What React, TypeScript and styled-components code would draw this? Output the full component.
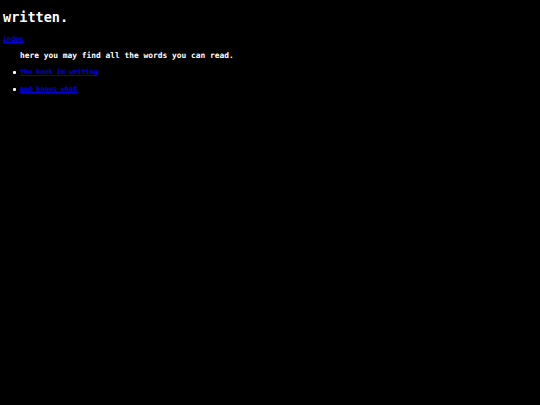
import React from 'react';
import styled, { createGlobalStyle } from 'styled-components';

const GlobalStyle = createGlobalStyle`
  html, body {
    margin: 0;
    background: #000;
  }
  body {
    padding: 4px 3px;
    font-family: "DejaVu Sans Mono", "Liberation Mono", monospace;
    font-weight: bold;
    color: #fff;
  }
`;

const Title = styled.h1`
  font-size: 13.5px;
  line-height: 17px;
  margin: 5px 0 0;
`;

const Link = styled.a`
  color: #0000e0;
  font-size: 6.8px;
  text-decoration: underline;
`;

const Intro = styled.p`
  font-size: 7.9px;
  line-height: 10px;
  margin: 6px 0 0 17px;
`;

const List = styled.ul`
  margin: 7px 0 0;
  padding-left: 17px;
  list-style: none;
`;

const Item = styled.li`
  position: relative;
  font-size: 6.8px;
  line-height: 9px;
  margin-bottom: 8px;

  &::before {
    content: '';
    position: absolute;
    left: -7px;
    top: 3px;
    width: 3px;
    height: 3px;
    border-radius: 1px;
    background: #fff;
  }
`;

const pages = [
  { name: 'the book im writing', url: '#book' },
  { name: 'god knows what', url: '#misc' },
];

const App = () => (
  <>
    <GlobalStyle />
    <Title>written.</Title>
    <Link href="#index">index</Link>
    <Intro>here you may find all the words you can read.</Intro>
    <List>
      {pages.map((page) => (
        <Item key={page.url}>
          <Link href={page.url}>{page.name}</Link>
        </Item>
      ))}
    </List>
  </>
);

export default App;
